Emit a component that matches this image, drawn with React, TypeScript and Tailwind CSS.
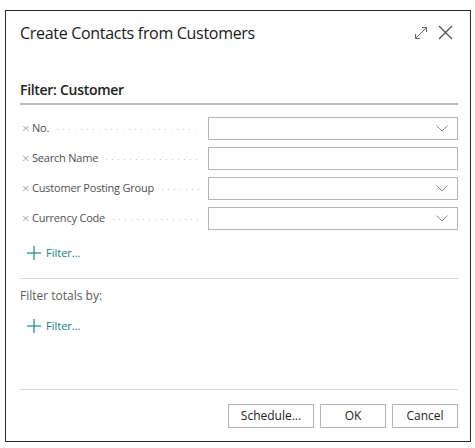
import React from "react";

const font = { fontFamily: '"Open Sans", "Noto Sans", sans-serif' };

function Chevron() {
  return (
    <svg width="12" height="7" viewBox="0 0 12 7" className="mr-[9px]">
      <polyline points="0.5,0.5 6,6 11.5,0.5" fill="none" stroke="#8a8a8a" strokeWidth="1" />
    </svg>
  );
}

function Row({ label, dropdown }: { label: string; dropdown: boolean }) {
  return (
    <div className="flex h-[23px] items-center">
      <div className="flex w-[188px] items-center pr-[7px]">
        <span className="w-[12px] pl-[2px] text-[13px] font-light leading-none text-[#8a8a8a]">×</span>
        <span className="whitespace-nowrap text-[11px] tracking-[-0.2px] text-[#505050]">{label}</span>
        <div className="ml-[8px] mt-[2px] h-px flex-1 bg-[repeating-linear-gradient(to_right,#c4c4c4_0_1px,transparent_1px_6px)]" />
      </div>
      <div className="flex h-[23px] flex-1 items-center justify-end border border-[#b4b4b4] bg-white">
        {dropdown && <Chevron />}
      </div>
    </div>
  );
}

function AddFilter() {
  return (
    <div className="flex items-center pl-[7px]">
      <svg width="14" height="14" viewBox="0 0 14 14">
        <line x1="7" y1="0" x2="7" y2="14" stroke="#1a8a8a" strokeWidth="1.2" />
        <line x1="0" y1="7" x2="14" y2="7" stroke="#1a8a8a" strokeWidth="1.2" />
      </svg>
      <span className="ml-[5px] text-[11px] text-[#0f7f80]">Filter...</span>
    </div>
  );
}

export default function App() {
  return (
    <div className="h-[448px] w-[475px] bg-white" style={font}>
      <div className="absolute left-[5px] top-[10px] flex h-[432px] w-[466px] flex-col border border-[#2a2a2a] bg-white pl-[14px] pr-[12px]">
        <div className="flex h-[42px] items-center justify-between pt-[1px]">
          <span className="text-[16px] tracking-[-0.3px] text-[#1a1a1a]">Create Contacts from Customers</span>
          <div className="flex items-center gap-[10px] pr-[5px]">
            <svg width="14" height="14" viewBox="0 0 14 14">
              <line x1="1.5" y1="12.5" x2="12.5" y2="1.5" stroke="#6a6a6a" strokeWidth="1" />
              <polyline points="1.5,8 1.5,12.5 6,12.5" fill="none" stroke="#6a6a6a" strokeWidth="1" />
              <polyline points="8,1.5 12.5,1.5 12.5,6" fill="none" stroke="#6a6a6a" strokeWidth="1" />
            </svg>
            <svg width="15" height="15" viewBox="0 0 15 15">
              <line x1="1" y1="1" x2="14" y2="14" stroke="#505050" strokeWidth="1.2" />
              <line x1="14" y1="1" x2="1" y2="14" stroke="#505050" strokeWidth="1.2" />
            </svg>
          </div>
        </div>
        <div className="mt-[24px] border-b-2 border-[#bdbdbd] pb-[2px]">
          <span className="text-[14px] font-semibold tracking-[-0.3px] text-[#212121]">Filter: Customer</span>
        </div>
        <div className="mt-[12px] flex flex-col gap-[7px]">
          <Row label="No." dropdown />
          <Row label="Search Name" dropdown={false} />
          <Row label="Customer Posting Group" dropdown />
          <Row label="Currency Code" dropdown />
        </div>
        <div className="mt-[15px]">
          <AddFilter />
        </div>
        <div className="mt-[16px] h-px bg-[#d6d6d6]" />
        <div className="mt-[8px] text-[12px] text-[#5a5a5a]">Filter totals by:</div>
        <div className="mt-[13px]">
          <AddFilter />
        </div>
        <div className="mt-auto h-px bg-[#d6d6d6]" />
        <div className="mb-[13px] mt-[14px] flex justify-end gap-[6px]">
          <button className="h-[24px] w-[86px] border border-[#b4b4b4] bg-white text-[12px] text-[#212121]">Schedule...</button>
          <button className="h-[24px] w-[66px] border border-[#b4b4b4] bg-white text-[12px] text-[#212121]">OK</button>
          <button className="h-[24px] w-[66px] border border-[#b4b4b4] bg-white text-[12px] text-[#212121]">Cancel</button>
        </div>
      </div>
    </div>
  );
}
